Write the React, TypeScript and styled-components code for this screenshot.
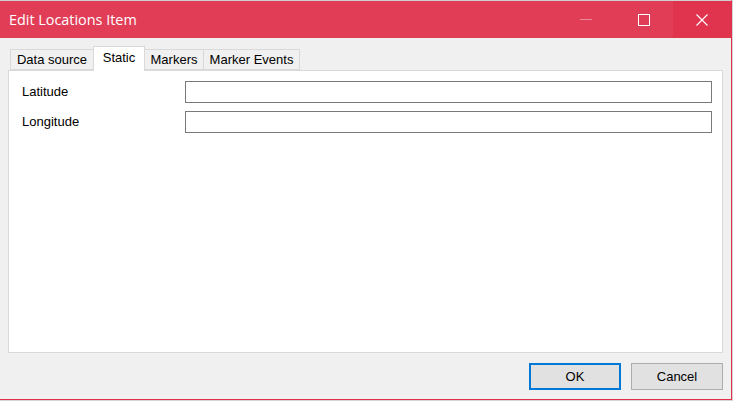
import React from "react";
import styled, { createGlobalStyle } from "styled-components";

const Global = createGlobalStyle`
  html, body { margin: 0; padding: 0; background: #d4d4d4; }
  * { box-sizing: border-box; }
`;

const Window = styled.div`
  width: 732px;
  height: 400px;
  display: flex;
  flex-direction: column;
  background: #f0f0f0;
  border-top: 1px solid #cfcfcf;
  border-right: 1px solid #e0304c;
  border-bottom: 1px solid #e0304c;
  font-family: "Liberation Sans", Arial, sans-serif;
  font-size: 13px;
  color: #000;
`;

const TitleBar = styled.div`
  height: 37px;
  flex: none;
  display: flex;
  align-items: stretch;
  background: #e13d57;
`;

const Title = styled.div`
  flex: 1;
  display: flex;
  align-items: center;
  padding-left: 9px;
  padding-bottom: 1px;
  color: #fff;
  font-family: "Open Sans", "Noto Sans", sans-serif;
  font-size: 14.4px;
`;

const CaptionButton = styled.div<{ $close?: boolean }>`
  width: 58px;
  display: flex;
  align-items: center;
  justify-content: center;
  background: ${(p) => (p.$close ? "#e0334e" : "transparent")};
`;

const Body = styled.div`
  flex: 1;
  display: flex;
  flex-direction: column;
  padding: 0 8px;
`;

const TabStrip = styled.div`
  height: 32px;
  flex: none;
  display: flex;
  align-items: flex-end;
  padding-left: 2px;
  position: relative;
  z-index: 1;
`;

const Tab = styled.div<{ $w: number; $active?: boolean }>`
  width: ${(p) => p.$w}px;
  height: ${(p) => (p.$active ? 25 : 21)}px;
  margin-bottom: ${(p) => (p.$active ? -1 : 0)}px;
  margin-left: -1px;
  &:first-child { margin-left: 0; }
  border: 1px solid #d9d9d9;
  border-bottom: ${(p) => (p.$active ? "none" : "1px solid #d9d9d9")};
  background: ${(p) => (p.$active ? "#ffffff" : "#f0f0f0")};
  display: flex;
  justify-content: center;
  align-items: ${(p) => (p.$active ? "flex-start" : "center")};
  padding-top: ${(p) => (p.$active ? 3 : 0)}px;
  white-space: nowrap;
  position: relative;
  z-index: ${(p) => (p.$active ? 2 : 1)};
`;

const Panel = styled.div`
  flex: 1;
  background: #fff;
  border: 1px solid #d9d9d9;
  padding: 10px 10px 0 13px;
  display: flex;
  flex-direction: column;
  gap: 8px;
`;

const FieldRow = styled.div`
  display: grid;
  grid-template-columns: 163px 1fr;
  align-items: center;
`;

const Label = styled.div`
  padding-bottom: 2px;
`;

const Input = styled.div`
  height: 22px;
  border: 1px solid #7a7a7a;
  background: #fff;
`;

const Footer = styled.div`
  height: 46px;
  flex: none;
  display: flex;
  justify-content: flex-end;
  align-items: flex-start;
  padding-top: 10px;
  gap: 10px;
`;

const Button = styled.div<{ $default?: boolean }>`
  width: 92px;
  height: 27px;
  background: #e1e1e1;
  border: ${(p) => (p.$default ? "2px solid #0078d7" : "1px solid #adadad")};
  display: flex;
  align-items: center;
  justify-content: center;
`;

export default function App() {
  return (
    <>
      <Global />
      <Window>
        <TitleBar>
          <Title>Edit Locations Item</Title>
          <CaptionButton>
            <svg width="12" height="12" viewBox="0 0 12 12">
              <line x1="0" y1="5.5" x2="12" y2="5.5" stroke="#f0899a" strokeWidth="1" />
            </svg>
          </CaptionButton>
          <CaptionButton>
            <svg width="12" height="12" viewBox="0 0 12 12">
              <rect x="0.5" y="0.5" width="11" height="11" fill="none" stroke="#fff" strokeWidth="1" />
            </svg>
          </CaptionButton>
          <CaptionButton $close>
            <svg width="12" height="12" viewBox="0 0 12 12">
              <path d="M0.5 0.5 L11.5 11.5 M11.5 0.5 L0.5 11.5" stroke="#fff" strokeWidth="1.1" fill="none" />
            </svg>
          </CaptionButton>
        </TitleBar>
        <Body>
          <TabStrip>
            <Tab $w={84}>Data source</Tab>
            <Tab $w={52} $active>Static</Tab>
            <Tab $w={60}>Markers</Tab>
            <Tab $w={97}>Marker Events</Tab>
          </TabStrip>
          <Panel>
            <FieldRow>
              <Label>Latitude</Label>
              <Input />
            </FieldRow>
            <FieldRow>
              <Label>Longitude</Label>
              <Input />
            </FieldRow>
          </Panel>
          <Footer>
            <Button $default>OK</Button>
            <Button>Cancel</Button>
          </Footer>
        </Body>
      </Window>
    </>
  );
}
